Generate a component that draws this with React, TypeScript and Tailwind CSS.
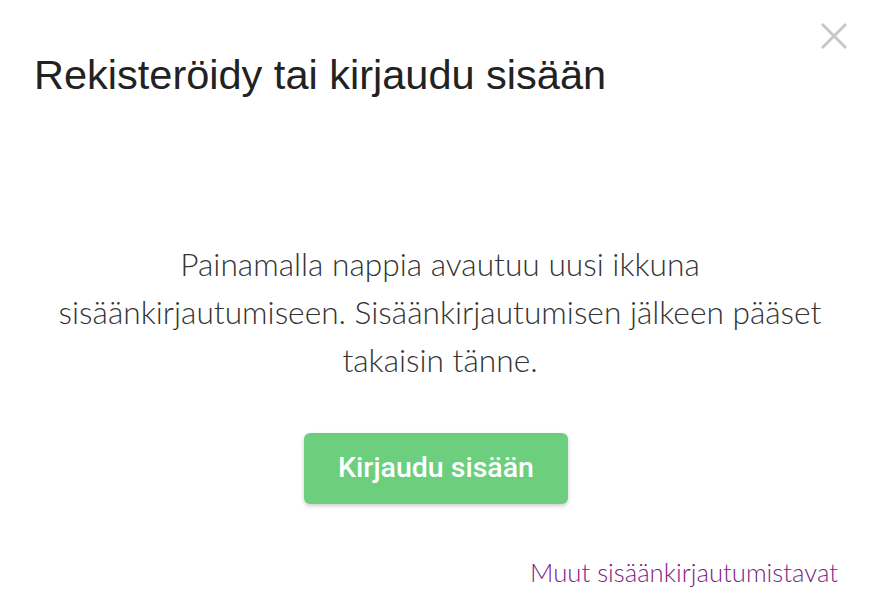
export default function App() {
  return (
    <div className="w-[880px] h-[614px] bg-white relative overflow-hidden">
      <button className="absolute right-[32px] top-[22px] w-[28px] h-[28px]" aria-label="Sulje">
        <svg viewBox="0 0 28 28" className="w-full h-full">
          <path d="M2 2L26 26M26 2L2 26" stroke="#c8c8c8" strokeWidth="3" />
        </svg>
      </button>
      <div className="px-[34px] pt-[49px]">
        <h1 className="text-[41.5px] leading-[52px] text-[#222] font-['Liberation_Sans',Arial,sans-serif]">
          Rekisteröidy tai kirjaudu sisään
        </h1>
      </div>
      <div className="flex flex-col items-center pt-[139px]">
        <p className="w-[800px] text-center text-[31.7px] leading-[48px] font-light text-[#333] font-['Lato',sans-serif]">
          Painamalla nappia avautuu uusi ikkuna sisäänkirjautumiseen. Sisäänkirjautumisen jälkeen pääset takaisin tänne.
        </p>
        <button className="mt-[49px] mr-[8px] w-[264px] h-[71px] rounded-[6px] bg-[#6ccf7e] text-white text-[28.5px] font-medium shadow-[0_2px_4px_rgba(0,0,0,0.2)] font-['Roboto',Arial,sans-serif]">
          Kirjaudu sisään
        </button>
      </div>
      <div className="absolute right-[42px] bottom-[22px]">
        <a className="text-[25.7px] text-[#7d2383] font-['Lato',sans-serif] font-light">Muut sisäänkirjautumistavat</a>
      </div>
    </div>
  );
}
